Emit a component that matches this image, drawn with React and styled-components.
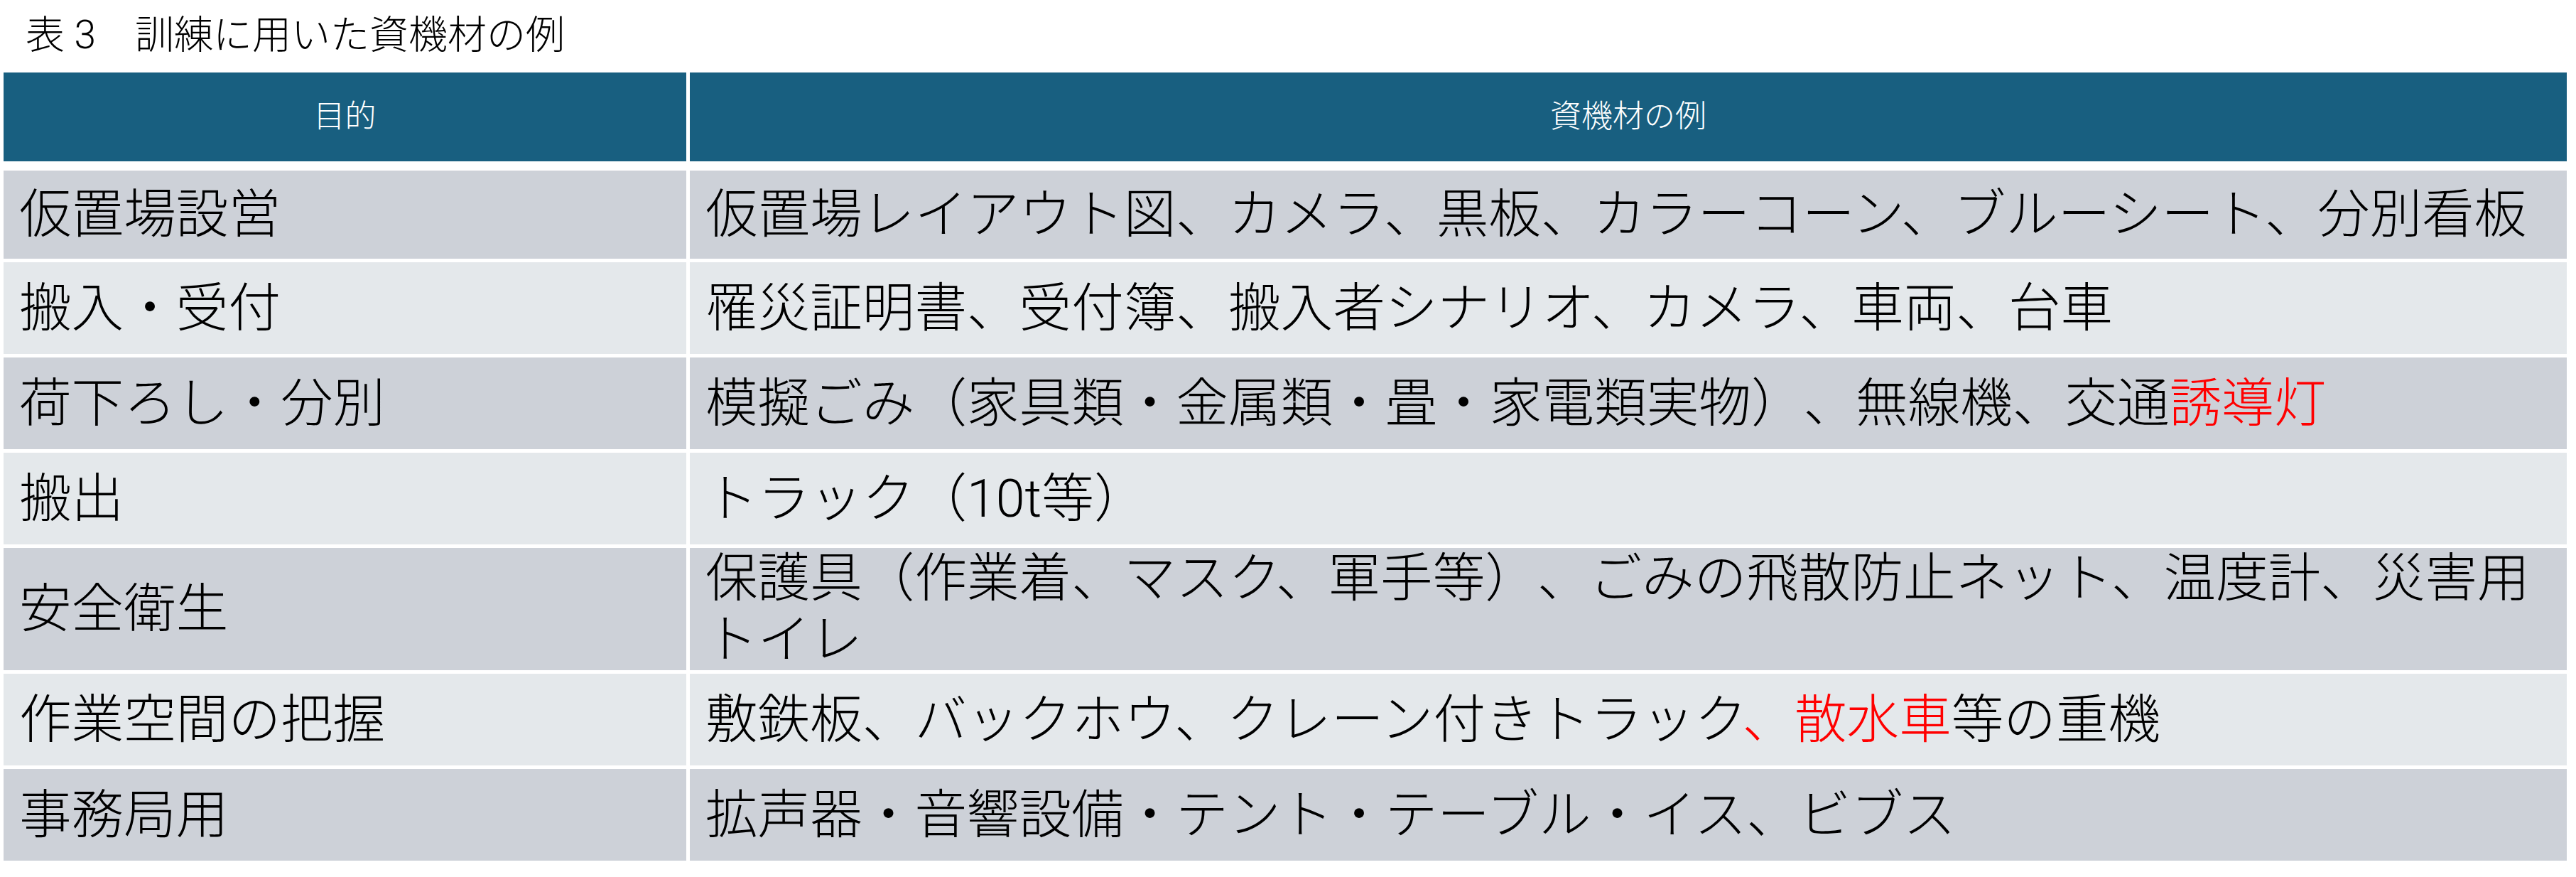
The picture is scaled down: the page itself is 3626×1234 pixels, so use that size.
import React from "react";
import styled, { createGlobalStyle } from "styled-components";

const GlobalStyle = createGlobalStyle`
  html, body {
    margin: 0;
    padding: 0;
    background: #ffffff;
  }
  body {
    font-family: "Roboto", "Liberation Sans", "Noto Sans CJK JP Light", "Noto Sans CJK JP", sans-serif;
    color: #000000;
    text-spacing-trim: space-all;
  }
`;

const Page = styled.div`
  padding: 19px 13px 0 5px;
`;

const Title = styled.h1`
  margin: 0 0 23px 0;
  padding-left: 31px;
  font-size: 55px;
  line-height: 60px;
  font-weight: 300;
  color: #000;
  white-space: pre;
`;

const Table = styled.div`
  display: grid;
  grid-template-columns: 961px 2642px;
  column-gap: 5px;
  row-gap: 5px;
`;

const HeadCell = styled.div`
  height: 125px;
  margin-bottom: 8px;
  background: #185f80;
  color: #ffffff;
  font-size: 44px;
  font-weight: 300;
  line-height: 1.2;
  display: flex;
  align-items: center;
  justify-content: center;
`;

const Cell = styled.div`
  box-sizing: border-box;
  height: ${(p) => p.$h}px;
  background: ${(p) => (p.$dark ? "#cdd1d8" : "#e4e8eb")};
  padding: 0 20px 0 22px;
  font-size: 73.6px;
  line-height: 86px;
  font-weight: 300;
  color: #000;
  display: flex;
  align-items: center;
`;

const Text = styled.div`
  width: 100%;
`;

const Red = styled.span`
  color: #ff0000;
`;

const rows = [
  { h: 124, purpose: "仮置場設営", items: ["仮置場レイアウト図、カメラ、黒板、カラーコーン、ブルーシート、分別看板"] },
  { h: 129, purpose: "搬入・受付", items: ["罹災証明書、受付簿、搬入者シナリオ、カメラ、車両、台車"] },
  { h: 129, purpose: "荷下ろし・分別", items: ["模擬ごみ（家具類・金属類・畳・家電類実物）、無線機、交通", { red: "誘導灯" }] },
  { h: 129, purpose: "搬出", items: ["トラック（10t等）"] },
  { h: 172, purpose: "安全衛生", items: ["保護具（作業着、マスク、軍手等）、ごみの飛散防止ネット、温度計、災害用トイレ"] },
  { h: 129, purpose: "作業空間の把握", items: ["敷鉄板、バックホウ、クレーン付きトラック", { red: "、散水車" }, "等の重機"] },
  { h: 129, purpose: "事務局用", items: ["拡声器・音響設備・テント・テーブル・イス、ビブス"] },
];

export default function App() {
  return (
    <>
      <GlobalStyle />
      <Page>
        <Title>{"表 3　訓練に用いた資機材の例"}</Title>
        <Table>
          <HeadCell>目的</HeadCell>
          <HeadCell>資機材の例</HeadCell>
          {rows.map((r, i) => (
            <React.Fragment key={i}>
              <Cell $h={r.h} $dark={i % 2 === 0}>
                <Text>{r.purpose}</Text>
              </Cell>
              <Cell $h={r.h} $dark={i % 2 === 0}>
                <Text>
                  {r.items.map((it, j) =>
                    typeof it === "string" ? (
                      <React.Fragment key={j}>{it}</React.Fragment>
                    ) : (
                      <Red key={j}>{it.red}</Red>
                    )
                  )}
                </Text>
              </Cell>
            </React.Fragment>
          ))}
        </Table>
      </Page>
    </>
  );
}
